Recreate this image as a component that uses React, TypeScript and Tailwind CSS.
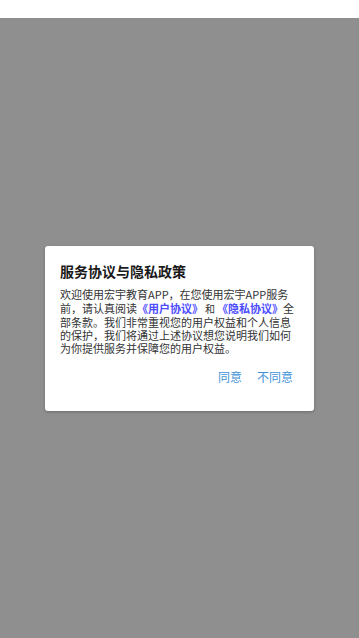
export default function App() {
    return (
        <main
            className="flex h-[638px] w-full flex-col bg-white"
            style={{ fontFamily: '"Noto Sans CJK SC", "Noto Sans", sans-serif' }}
        >
            <div className="h-[18px] shrink-0 bg-white" />

            <div className="flex flex-1 items-center justify-center bg-[#8f8f8f]">
                <div className="h-[165px] w-[269px] rounded-[3px] bg-white pl-[15px] pr-[18px] pt-[14px] shadow-[0_1px_3px_rgba(0,0,0,0.25)]">
                    <h1 className="text-[14px] font-bold leading-[22px] text-[#1a1a1a]">
                        服务协议与隐私政策
                    </h1>
                    <p className="mt-[6px] text-[11px] leading-[13px] text-[#333333]">
                        欢迎使用宏宇教育APP，在您使用宏宇APP服务前，请认真阅读
                        <span className="inline-block text-[11px] font-bold leading-[15px] text-[#4d4dff]">
                            《用户协议》
                        </span>
                        <span className="inline-block px-[2px] text-[10px] leading-[13px]">和</span>
                        <span className="inline-block text-[11px] font-bold leading-[15px] text-[#4d4dff]">
                            《隐私协议》
                        </span>
                        全部条款。我们非常重视您的用户权益和个人信息的保护，我们将通过上述协议想您说明我们如何为你提供服务并保障您的用户权益。
                    </p>
                    <div className="mt-[13px] flex justify-end gap-[15px] pr-[3px] text-[12px] leading-[18px] text-[#3f92d8]">
                        <span>同意</span>
                        <span>不同意</span>
                    </div>
                </div>
            </div>
        </main>
    );
}
